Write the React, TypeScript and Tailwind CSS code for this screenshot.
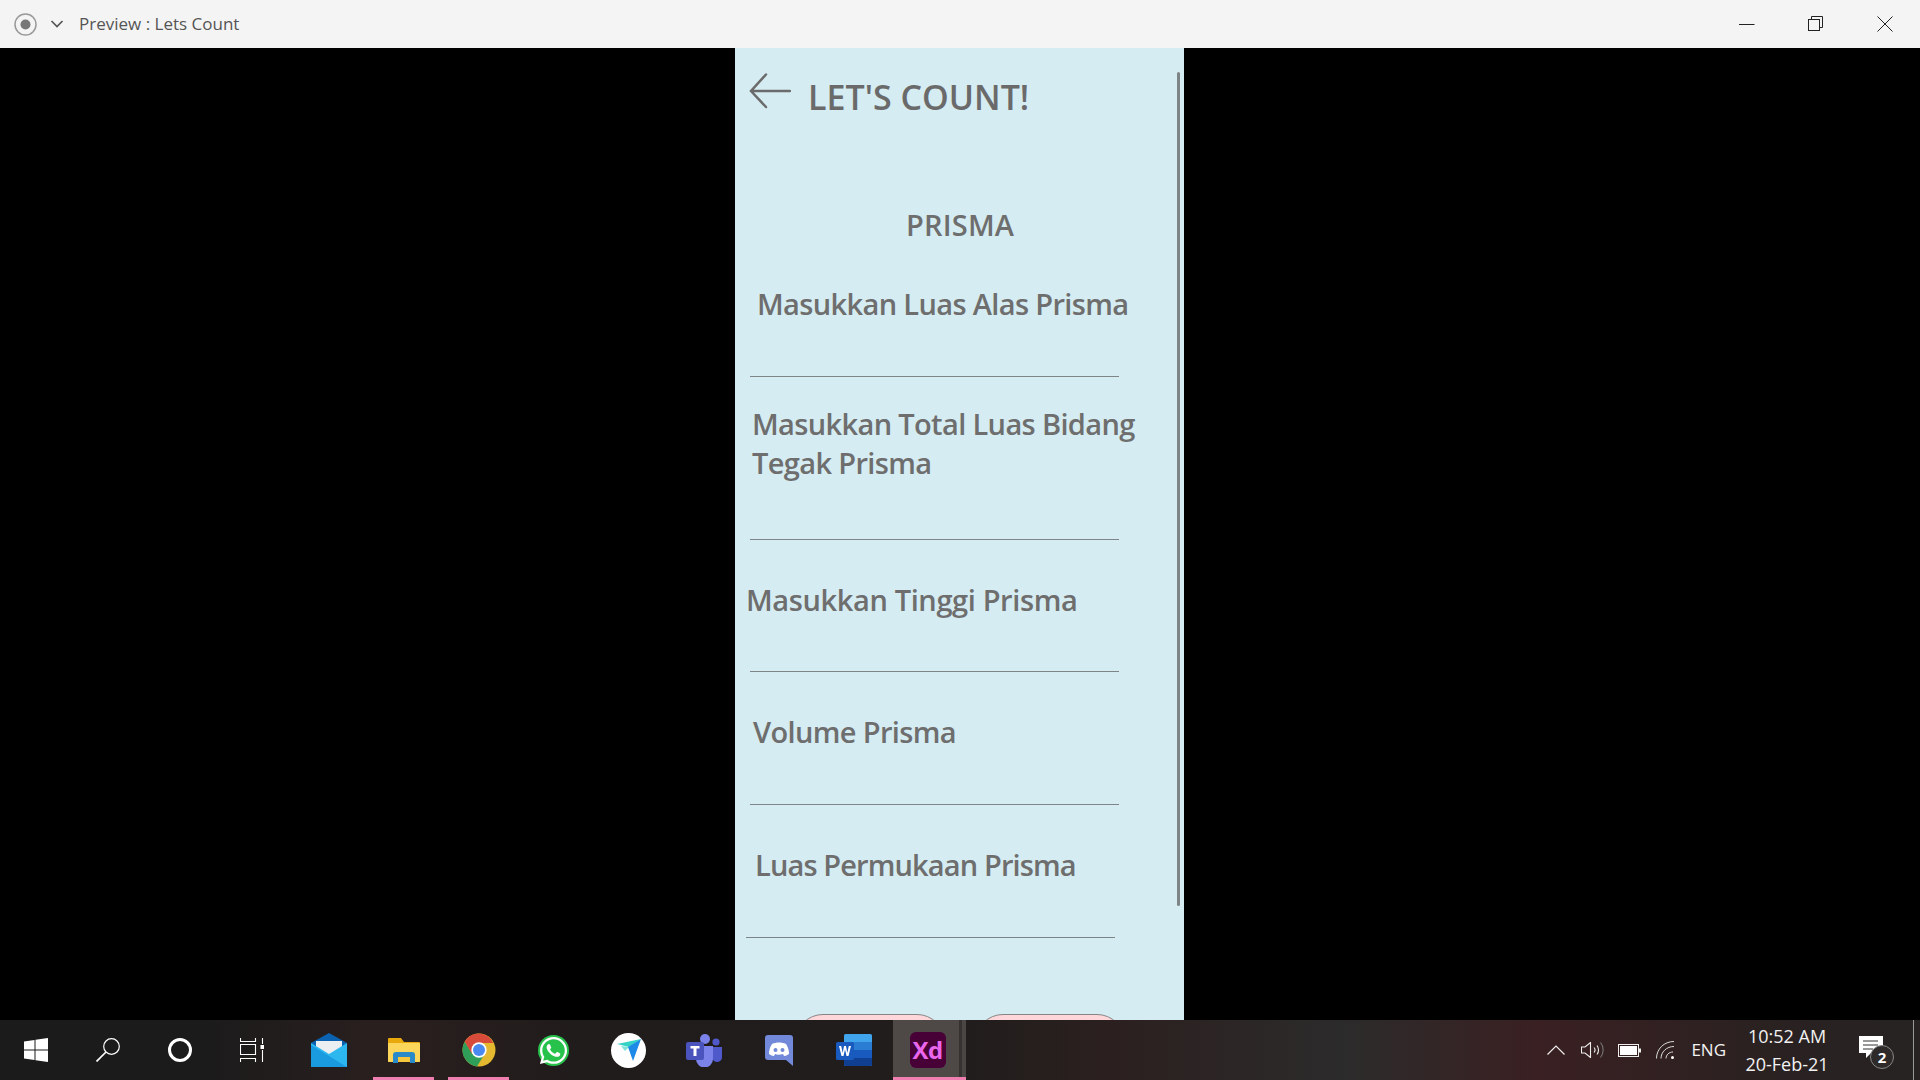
import React from 'react';
import { FaWhatsapp } from 'react-icons/fa';

const bodyFont = "font-['Open_Sans','Noto_Sans',sans-serif]";

const Field: React.FC<{ label: React.ReactNode; textClass: string; lineClass: string; gapClass: string }> = ({ label, textClass, lineClass, gapClass }) => (
  <div>
    <p className={`text-[29px] leading-[39px] font-semibold text-[#6e6e6e] ${textClass}`}>{label}</p>
    <div className={`h-px w-[369px] bg-[#7d8587] ${gapClass} ${lineClass}`} />
  </div>
);

const WindowControls = () => (
  <div className="flex h-full items-center pr-[1px] text-[#222]">
    <button type="button" className="flex h-full w-[69px] items-center justify-center">
      <svg width="16" height="16" viewBox="0 0 16 16"><path d="M0 8.500h15.500" stroke="currentColor" /></svg>
    </button>
    <button type="button" className="flex h-full w-[69px] items-center justify-center">
      <svg width="16" height="16" viewBox="0 0 16 16" fill="none" stroke="currentColor"><rect x="0.500" y="3.500" width="11" height="11" /><path d="M3.500 3.500v-3h11v11h-3" /></svg>
    </button>
    <button type="button" className="flex h-full w-[69px] items-center justify-center">
      <svg width="16" height="16" viewBox="0 0 16 16" stroke="currentColor"><path d="M0.500 0.500l15 15M15.500 0.500l-15 15" /></svg>
    </button>
  </div>
);

const TitleBar = () => (
  <header className="flex h-12 shrink-0 items-center justify-between bg-[#f4f4f4]">
    <div className="flex items-center pl-[14px]">
      <svg width="23" height="23" viewBox="0 0 23 23"><circle cx="11.500" cy="11.500" r="10.500" fill="none" stroke="#9a9a9a" strokeWidth="1.500" /><circle cx="11.500" cy="11.500" r="5" fill="#777" /></svg>
      <svg className="ml-[13px]" width="14" height="10" viewBox="0 0 14 10" fill="none"><path d="M1.500 2l5.500 5.500L12.500 2" stroke="#555" strokeWidth="1.700" /></svg>
      <span className={`ml-[15px] text-[17px] text-[#555] ${bodyFont}`}>Preview : Lets Count</span>
    </div>
    <WindowControls />
  </header>
);

const Phone = () => (
  <section className={`relative ml-[735px] h-full w-[449px] overflow-hidden bg-[#d5ecf2] ${bodyFont}`}>
    <div className="absolute right-[4px] top-[24px] h-[834px] w-[3px] rounded-full bg-[#7f8585]" />
    <div className="flex h-[84px] items-start pl-[14px] pt-[25px]">
      <svg width="42" height="36" viewBox="0 0 42 36" fill="none" stroke="#6b6b6b" strokeWidth="2.500" strokeLinecap="round"><path d="M41 18H2M17 1.500L2 18l15 16" /></svg>
      <h1 className="ml-[17px] mt-[2px] text-[34px] font-semibold leading-[44px] text-[#6a6a6a]">LET'S COUNT!</h1>
    </div>
    <h2 className="mt-[73px] pl-[171px] text-[29px] font-semibold leading-[39px] tracking-[0.2px] text-[#6e6e6e]">PRISMA</h2>
    <div className="mt-[40px]">
      <Field label="Masukkan Luas Alas Prisma" textClass="pl-[22px] tracking-[-0.64px]" lineClass="ml-[15px]" gapClass="mt-[53px]" />
      <Field label={<>Masukkan Total Luas Bidang<br />Tegak Prisma</>} textClass="pl-[17px] mt-[27px] tracking-[-0.64px]" lineClass="ml-[15px]" gapClass="mt-[57px]" />
      <Field label="Masukkan Tinggi Prisma" textClass="pl-[11px] mt-[40px] tracking-[-0.38px]" lineClass="ml-[15px]" gapClass="mt-[52px]" />
      <Field label="Volume Prisma" textClass="pl-[18px] mt-[40px] tracking-[-0.64px]" lineClass="ml-[15px]" gapClass="mt-[53px]" />
      <Field label="Luas Permukaan Prisma" textClass="pl-[20px] mt-[40px] tracking-[-0.87px]" lineClass="ml-[11px]" gapClass="mt-[53px]" />
    </div>
    <div className="ml-[60px] mt-[76px] flex gap-[30px]">
      <button type="button" className="h-[56px] w-[150px] rounded-[28px] border border-[#858585] bg-[#ffd6da]" />
      <button type="button" className="h-[56px] w-[150px] rounded-[28px] border border-[#858585] bg-[#ffd6da]" />
    </div>
  </section>
);

const TaskCell: React.FC<{ w: string; running?: boolean; children: React.ReactNode }> = ({ w, running, children }) => (
  <div className={`relative flex h-full items-center justify-center ${w}`}>
    {children}
    {running && <div className="absolute bottom-0 left-[7px] right-[7px] h-[3px] bg-[#ee7fb0]" />}
  </div>
);

const MailIcon = () => (
  <svg width="36" height="34" viewBox="0 0 36 34">
    <path d="M0 10L18 0l18 10v22H0z" fill="#0a62b0" />
    <path d="M5 8h26v14H5z" fill="#eceff1" />
    <path d="M0 10l18 11 18-11v24H0z" fill="#2db7ef" />
    <path d="M0 34V12l36 22z" fill="#1a9be0" />
  </svg>
);

const FolderIcon = () => (
  <svg width="32" height="26" viewBox="0 0 32 26">
    <path d="M0 2a1 1 0 011-1h12l3 4h15a1 1 0 011 1v18a1 1 0 01-1 1H1a1 1 0 01-1-1z" fill="#e9a80c" />
    <path d="M0 6h31a1 1 0 011 1v17a1 1 0 01-1 1H1a1 1 0 01-1-1z" fill="#fbd65a" />
    <path d="M5 26v-8a3 3 0 013-3h16a3 3 0 013 3v8h-5v-6H10v6z" fill="#2a8ac9" />
    <path d="M10 20h12v5H10z" fill="#f6c63c" />
  </svg>
);

const ChromeIcon = () => (
  <svg width="34" height="34" viewBox="0 0 34 34">
    <circle cx="17" cy="17" r="16.500" fill="#e5b92f" />
    <path d="M17 .5A16.500 16.500 0 002.700 8.700L9.500 21 17 10h14.300A16.500 16.500 0 0017 .5z" fill="#d84a3a" />
    <path d="M2.700 8.700A16.500 16.500 0 0015 33.400L22 22 10 21z" fill="#2f9e58" />
    <circle cx="17" cy="17" r="7.700" fill="#fff" />
    <circle cx="17" cy="17" r="6" fill="#4a8af0" />
  </svg>
);

const SendIcon = () => (
  <div className="flex h-[35px] w-[35px] items-center justify-center rounded-full bg-white">
    <svg width="24" height="24" viewBox="0 0 24 24">
      <path d="M0 6l24-5-12 8z" fill="#35d2c6" />
      <path d="M4 8l8 1-4 4z" fill="#7fe3da" />
      <path d="M24 1l-8 22-5-14z" fill="#1d8ae8" />
    </svg>
  </div>
);

const TeamsIcon = () => (
  <svg width="36" height="33" viewBox="0 0 36 33">
    <circle cx="19" cy="5" r="5" fill="#7b83eb" />
    <circle cx="30" cy="8" r="3.600" fill="#5059c9" />
    <path d="M25 13h11v10a5 5 0 01-9 3z" fill="#5059c9" />
    <path d="M10 12h17v13a8.500 8.500 0 01-17 0z" fill="#7b83eb" />
    <rect x="0" y="8" width="18" height="18" rx="2" fill="#4b53bc" />
    <path d="M4.500 12h9v2.500h-3V22h-3v-7.500h-3z" fill="#fff" />
  </svg>
);

const DiscordIcon = () => (
  <svg width="28" height="31" viewBox="0 0 28 31">
    <path d="M3 0h22a3 3 0 013 3v28l-7-6H3a3 3 0 01-3-3V3a3 3 0 013-3z" fill="#7289da" />
    <path d="M7 9c4-2 10-2 14 0 2 3 3 6 3 10-2 1-3 2-5 2l-1-2c-3 1-6 1-8 0l-1 2c-2 0-3-1-5-2 0-4 1-7 3-10z" fill="#fff" />
    <circle cx="10.500" cy="15" r="2" fill="#7289da" />
    <circle cx="17.500" cy="15" r="2" fill="#7289da" />
  </svg>
);

const WordIcon = () => (
  <svg width="36" height="32" viewBox="0 0 36 32">
    <rect x="8" y="0" width="28" height="32" rx="1.500" fill="#41a5ee" />
    <rect x="8" y="8" width="28" height="8" fill="#2b7cd3" />
    <rect x="8" y="16" width="28" height="8" fill="#185abd" />
    <path d="M8 24h28v6.500a1.500 1.500 0 01-1.500 1.500h-25A1.500 1.500 0 018 30.500z" fill="#103f91" />
    <rect x="0" y="8" width="18" height="18" rx="1.500" fill="#185abd" />
    <path d="M3 12h2.200l1.500 7 1.300-7h2l1.300 7 1.500-7H15l-2.500 10h-2L9 15.500 7.500 22h-2z" fill="#fff" />
  </svg>
);

const XdIcon = () => (
  <div className="flex h-[36px] w-[36px] items-center justify-center rounded-[6px] bg-[#470137] text-[24px] font-bold leading-none tracking-[-0.5px] text-[#ea66ec]">Xd</div>
);

const TrayIcons = () => (
  <>
    <svg width="18" height="10" viewBox="0 0 18 10" fill="none" stroke="#eee" strokeWidth="1.200"><path d="M0.500 9.500L9 1l8.500 8.500" /></svg>
    <svg className="ml-[16px]" width="23" height="16" viewBox="0 0 23 16" fill="none" stroke="#eee" strokeWidth="1.100"><path d="M0.500 5h3.500L9.500 0.500v15L4 11H0.500zM13 5.500c1.300 1.500 1.300 3.500 0 5M16 3.500c2 2.500 2 6.500 0 9" /><path d="M19.500 0.500c3.500 4 3.500 11 0 15" stroke="#777" /></svg>
    <svg className="ml-[14px]" width="23" height="13" viewBox="0 0 23 13"><rect x="0.500" y="0.500" width="20" height="12" fill="none" stroke="#eee" /><rect x="2" y="2" width="17" height="9" fill="#fff" /><rect x="21" y="4.500" width="2" height="4" fill="#eee" /></svg>
    <svg className="ml-[15px]" width="20" height="18" viewBox="0 0 20 18" fill="none" stroke="#ddd"><path d="M0.500 17.500C0.500 8 8 0.500 18 0.500M5 17.500C5 11 10.500 5.500 18 5.500M10 17.500c0-3.500 3-6.500 7-6.500" /><circle cx="16.500" cy="16.500" r="1.500" fill="#fff" stroke="none" /></svg>
  </>
);

const Taskbar = () => (
  <footer className={`flex h-[60px] shrink-0 items-center justify-between bg-[linear-gradient(90deg,#1b1b1b_0%,#1c1b1b_11%,#2a1f1f_20%,#201c1b_30%,#201d1c_50%,#2b201f_58%,#2c2b2b_70%,#3a2022_80%,#2a2121_92%,#272323_100%)] ${bodyFont}`}>
    <div className="flex h-full items-center">
      <div className="flex h-full w-[72px] items-center justify-center">
        <svg width="24" height="24" viewBox="0 0 24 24" fill="#fff"><path d="M0 3.500L10.500 2v9.500H0zM11.500 1.800L24 0v11.500H11.500zM0 12.500h10.500V22L0 20.500zM11.500 12.500H24V24l-12.500-1.800z" /></svg>
      </div>
      <div className="flex h-full w-[72px] items-center justify-center">
        <svg width="24" height="24" viewBox="0 0 24 24" fill="none" stroke="#fff" strokeWidth="1.200"><circle cx="15.500" cy="8.500" r="7.800" /><path d="M10 14L0.500 23.500" strokeWidth="1.700" /></svg>
      </div>
      <div className="flex h-full w-[72px] items-center justify-center">
        <div className="h-[24px] w-[24px] rounded-full border-[3.5px] border-white" />
      </div>
      <div className="flex h-full w-[72px] items-center justify-center">
        <svg width="24" height="24" viewBox="0 0 24 24" fill="none" stroke="#fff" strokeWidth="1.100"><path d="M0.500 0v3.500h15V0M0.500 6.500h15v10h-15zM0.500 24v-3.500h15V24M22.500 0v6M22.500 12v12" /><rect x="20.500" y="7" width="4" height="4" fill="#fff" stroke="none" /></svg>
      </div>
      <div className="flex h-full items-center pl-[3px]">
        <TaskCell w="w-[75px]"><MailIcon /></TaskCell>
        <TaskCell w="w-[75px]" running><FolderIcon /></TaskCell>
        <TaskCell w="w-[75px]" running><ChromeIcon /></TaskCell>
        <TaskCell w="w-[75px]">
          <div className="flex h-[31px] w-[31px] items-center justify-center rounded-full bg-[#27c24c] text-white"><FaWhatsapp size={31} /></div>
        </TaskCell>
        <TaskCell w="w-[75px]"><SendIcon /></TaskCell>
        <TaskCell w="w-[75px]"><TeamsIcon /></TaskCell>
        <TaskCell w="w-[75px]"><DiscordIcon /></TaskCell>
        <TaskCell w="w-[75px]"><WordIcon /></TaskCell>
        <div className="relative ml-[2px] flex h-full w-[73px] items-center">
          <div className="flex h-full w-[66px] items-center justify-center bg-[#4e4946] pl-[3px]"><XdIcon /></div>
          <div className="h-full w-[3px] bg-[#353231]" />
          <div className="h-full w-[4px] bg-[#4a4644]" />
          <div className="absolute bottom-0 left-0 right-0 h-[3px] bg-[#ee7fb0]" />
        </div>
      </div>
    </div>
    <div className="flex h-full items-center text-[#f2f2f2]">
      <TrayIcons />
      <span className="ml-[15px] text-[17px]">ENG</span>
      <div className="ml-[15px] flex w-[92px] flex-col items-center text-[18px] leading-[28px]">
        <span>10:52 AM</span>
        <span>20-Feb-21</span>
      </div>
      <div className="relative ml-[26px] mr-[37px] h-[28px] w-[24px]">
        <svg width="24" height="28" viewBox="0 0 24 28"><path d="M0 0h24v17H12l-5 5v-5H0z" fill="#fff" /><path d="M4 5h15M4 9h15M4 13h10" stroke="#333" strokeWidth="1" /></svg>
        <span className="absolute left-[11px] top-[9px] flex h-[24px] w-[24px] items-center justify-center rounded-full border border-[#888] bg-[#2e2a2a] text-[15px] font-bold text-white">2</span>
      </div>
      <div className="absolute bottom-0 right-[6px] h-[60px] w-px bg-[#999]" />
    </div>
  </footer>
);

export default function App() {
  return (
    <div className="relative flex h-screen w-full flex-col overflow-hidden bg-black">
      <TitleBar />
      <main className="min-h-0 flex-1 bg-black">
        <Phone />
      </main>
      <Taskbar />
    </div>
  );
}
